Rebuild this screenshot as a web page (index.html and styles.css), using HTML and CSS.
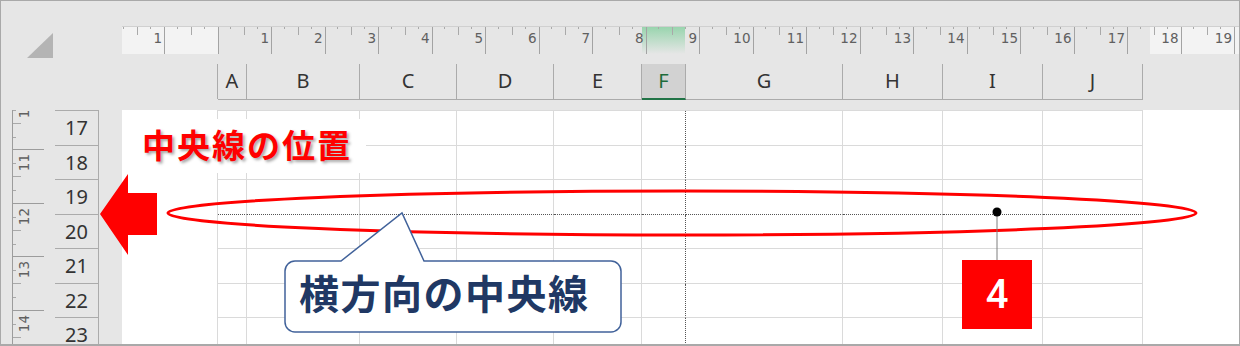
FILE: index.html
```html
<!DOCTYPE html>
<html lang="ja">
<head>
<meta charset="utf-8">
<title>中央線の位置</title>
<link rel="stylesheet" href="styles.css">
</head>
<body>
<div class="frame">
  <div class="corner">
    <svg width="26" height="25"><polygon points="0,25 26,25 26,0" fill="#b4b4b4"/></svg>
  </div>
  <div class="top">
    <div class="ruler">
      <span class="hl"></span>
      <span class="mk first">1</span>
      <span class="mk"></span>
      <span class="mk">1</span>
      <span class="mk">2</span>
      <span class="mk">3</span>
      <span class="mk">4</span>
      <span class="mk">5</span>
      <span class="mk">6</span>
      <span class="mk">7</span>
      <span class="mk">8</span>
      <span class="mk">9</span>
      <span class="mk">10</span>
      <span class="mk">11</span>
      <span class="mk">12</span>
      <span class="mk">13</span>
      <span class="mk">14</span>
      <span class="mk">15</span>
      <span class="mk">16</span>
      <span class="mk">17</span>
      <span class="mk">18</span>
      <span class="mk">19</span>
      <span class="mk"></span>
    </div>
    <div class="cols">
      <div class="ch">A</div>
      <div class="ch">B</div>
      <div class="ch">C</div>
      <div class="ch">D</div>
      <div class="ch">E</div>
      <div class="ch sel">F</div>
      <div class="ch">G</div>
      <div class="ch">H</div>
      <div class="ch">I</div>
      <div class="ch">J</div>
    </div>
  </div>
  <div class="side">
    <div class="vruler">
      <div class="vmk"><span>10</span></div>
      <div class="vmk"><span>11</span></div>
      <div class="vmk"><span>12</span></div>
      <div class="vmk"><span>13</span></div>
      <div class="vmk"><span>14</span></div>
    </div>
    <div class="rows">
      <div>17</div>
      <div>18</div>
      <div>19</div>
      <div>20</div>
      <div>21</div>
      <div>22</div>
      <div>23</div>
    </div>
  </div>
  <div class="sheet">
    <div class="cells">
      <div></div><div></div><div></div><div></div><div></div><div></div><div></div><div></div><div></div><div></div>
      <div></div><div></div><div></div><div></div><div></div><div></div><div></div><div></div><div></div><div></div>
      <div></div><div></div><div></div><div></div><div></div><div></div><div></div><div></div><div></div><div></div>
      <div></div><div></div><div></div><div></div><div></div><div></div><div></div><div></div><div></div><div></div>
      <div></div><div></div><div></div><div></div><div></div><div></div><div></div><div></div><div></div><div></div>
      <div></div><div></div><div></div><div></div><div></div><div></div><div></div><div></div><div></div><div></div>
      <div></div><div></div><div></div><div></div><div></div><div></div><div></div><div></div><div></div><div></div>
    </div>
  </div>

  <!-- 注釈 -->
  <svg class="marks" width="1240" height="346">
    <ellipse cx="682" cy="213" rx="514" ry="22" fill="none" stroke="#ff0000" stroke-width="3"/>
    <polygon points="100,214 128,174 128,193 157,193 157,235 128,235 128,255" fill="#ff0000"/>
    <path d="M295,261 H341 L402,213 L424,261 H611 A10,10 0 0 1 621,271 V322 A10,10 0 0 1 611,332 H295 A10,10 0 0 1 285,322 V271 A10,10 0 0 1 295,261 Z" fill="#fff" stroke="#41629a" stroke-width="1.5"/>
    <line x1="997" y1="212" x2="997" y2="260" stroke="#7f7f7f"/>
    <circle cx="997" cy="212" r="4.5" fill="#000"/>
  </svg>
  <div class="title">中央線の位置</div>
  <div class="callout">横方向の中央線</div>
  <div class="num">4</div>
</div>
</body>
</html>
```

FILE: styles.css
```css
*{margin:0;padding:0;box-sizing:border-box;}
body{background:#fff;font-family:"Noto Sans","Noto Sans CJK JP",sans-serif;}
.frame{position:relative;width:1240px;height:346px;border:1px solid #a9a9a9;border-bottom-width:2px;background:#e6e6e6;display:grid;grid-template-columns:121px minmax(0,1fr);grid-template-rows:109px minmax(0,1fr);overflow:hidden;}

/* 左上 */
.corner{padding:32px 0 0 26px;}
.corner svg{display:block;}

/* 上のルーラーと列見出し */
.top{padding-top:25px;min-width:0;}
.ruler{position:relative;z-index:0;display:flex;height:28px;border-top:1px solid #d0d0d0;overflow:hidden;
  background:linear-gradient(to right,#f3f3f3 96px,transparent 96px,transparent 1028px,#f3f3f3 1028px);}
.mk{flex:none;width:53.5px;height:100%;border-right:1px solid #a3a3a3;text-align:right;padding:3px 2px 0 0;
  font:13.5px/16px "DejaVu Sans",sans-serif;color:#606060;
  background:linear-gradient(#a9a9a9,#a9a9a9) right 13px top 0/1px 2px no-repeat,
             linear-gradient(#a9a9a9,#a9a9a9) right 26px top 0/1px 8px no-repeat,
             linear-gradient(#a9a9a9,#a9a9a9) right 40px top 0/1px 2px no-repeat;}
.mk.first{width:43px;}
.hl{position:absolute;z-index:-1;left:520px;top:0;width:43px;height:100%;background:linear-gradient(rgba(120,205,150,.7),rgba(120,205,150,0));}

.cols,.cells{display:grid;grid-template-columns:29px 113px 97px 97px 88px 44px 157px 100px 100px 100px;width:926px;}
.cols{margin:10px 0 0 95px;height:35px;border-left:1px solid #ababab;}
.ch{border-right:1px solid #ababab;border-bottom:1px solid #ababab;text-align:center;font-size:20px;line-height:34px;color:#333;}
.ch.sel{background:#d2d2d2;color:#1d6b3a;border-bottom:2px solid #217346;}

/* 左のルーラーと行番号 */
.side{display:flex;min-height:0;overflow:hidden;}
.vruler{flex:none;margin-left:11px;width:32px;height:100%;border-left:1px solid #9c9c9c;overflow:hidden;}
.vmk{height:53.5px;border-top:1px solid #9c9c9c;padding:4px 0 0 4px;
  background:linear-gradient(#a9a9a9,#a9a9a9) left 0 top 13px/3px 1px no-repeat,
             linear-gradient(#a9a9a9,#a9a9a9) left 0 top 26px/8px 1px no-repeat,
             linear-gradient(#a9a9a9,#a9a9a9) left 0 top 40px/3px 1px no-repeat;}
.vmk:first-child{margin-top:-14.5px;}
.vmk span{display:block;width:14px;writing-mode:vertical-rl;transform:rotate(180deg);font:13.5px/14px "DejaVu Sans",sans-serif;color:#606060;}

.rows,.cells{grid-template-rows:35px 34px 35px 34px 35px 34px 35px;}
.rows{flex:none;display:grid;margin-left:11px;width:44px;border-top:1px solid #ababab;align-content:start;}
.rows div{border-right:1px solid #ababab;border-bottom:1px solid #ababab;text-align:center;font-size:20px;line-height:34px;color:#333;}

/* シート */
.sheet{background:#fff;padding-left:95px;overflow:hidden;}
.cells{border-left:1px solid #dadada;border-top:1px solid #dadada;}
.cells div{border-right:1px solid #dadada;border-bottom:1px solid #dadada;}
.cells div:nth-child(10n+6){border-right:1px dotted #555;}
.cells div:nth-child(n+21):nth-child(-n+30){border-bottom:1px dotted #555;}

/* 注釈 */
.marks{position:absolute;left:-1px;top:-1px;pointer-events:none;}
.title{position:absolute;left:129px;top:118px;width:236px;height:54px;background:#fff;padding-left:12px;
  font:700 33px/50px "Noto Sans CJK JP",sans-serif;letter-spacing:2px;color:#f00;text-shadow:2px 2px 3px rgba(0,0,0,.35);}
.callout{position:absolute;left:284px;top:260px;width:337px;height:72px;padding-left:14px;
  font:700 40px/62px "Noto Sans CJK JP",sans-serif;letter-spacing:1.5px;color:#203864;}
.num{position:absolute;left:961px;top:259px;width:70px;height:69px;background:#f00;color:#fff;text-align:center;
  font:500 40px/69px Roboto,sans-serif;}
```
